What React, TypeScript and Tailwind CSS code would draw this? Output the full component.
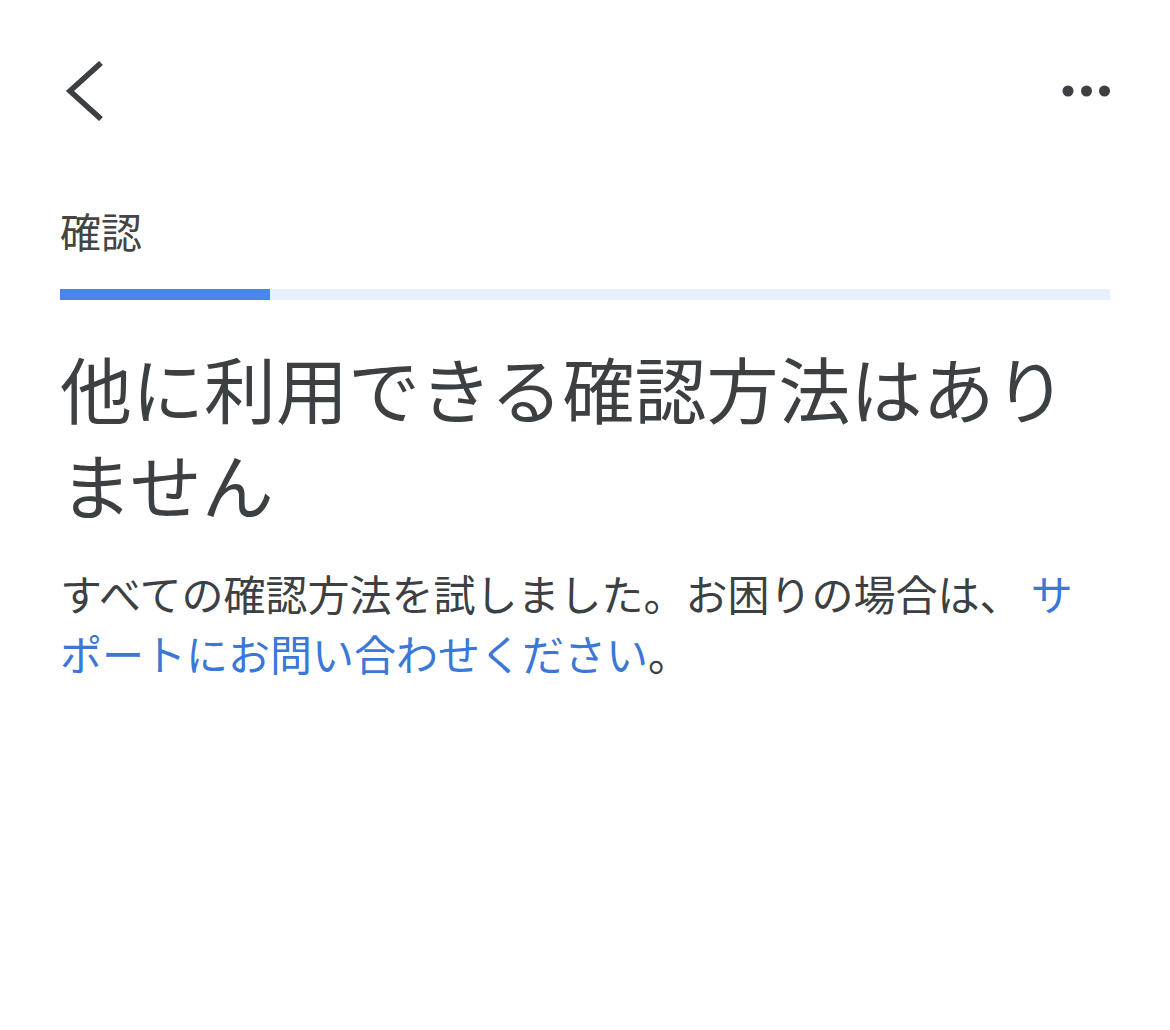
export default function App() {
  const progress = 20; // percent of steps done

  return (
    <div
      className="min-h-[1030px] w-full bg-white px-[60px] text-[#3c4043]"
      style={{ fontFamily: '"Noto Sans CJK JP", "Noto Sans", sans-serif' }}
    >
      <div className="flex items-center justify-between pt-[61px]">
        <button type="button" className="ml-[4px] block">
          <svg width="40" height="60" viewBox="0 0 40 60" fill="none">
            <polyline
              points="37,2 6,30 37,58"
              stroke="#3c4043"
              strokeWidth="5.6"
              strokeLinejoin="miter"
            />
          </svg>
        </button>
        <button type="button" className="block">
          <svg width="48" height="12" viewBox="0 0 48 12">
            <circle cx="6" cy="6" r="5.5" fill="#3c4043" />
            <circle cx="24.5" cy="6" r="5.5" fill="#3c4043" />
            <circle cx="42.5" cy="6" r="5.5" fill="#3c4043" />
          </svg>
        </button>
      </div>

      <div className="mt-[85px] text-[41px] leading-[48px] text-[#444]">確認</div>

      <div className="mt-[35px] h-[11px] w-full bg-[#e8effd]">
        <div className="h-full bg-[#4a86e8]" style={{ width: `${progress}%` }} />
      </div>

      <h1 className="mt-[39px] text-[72px] font-normal leading-[96px]">
        他に利用できる確認方法はありません
      </h1>

      <p className="mt-[32px] text-[42px] leading-[60px]">
        すべての確認方法を試しました。お困りの場合は、{" "}
        <a href="#" className="text-[#3b77d6]">
          サポートにお問い合わせください
        </a>
        。
      </p>
    </div>
  );
}
